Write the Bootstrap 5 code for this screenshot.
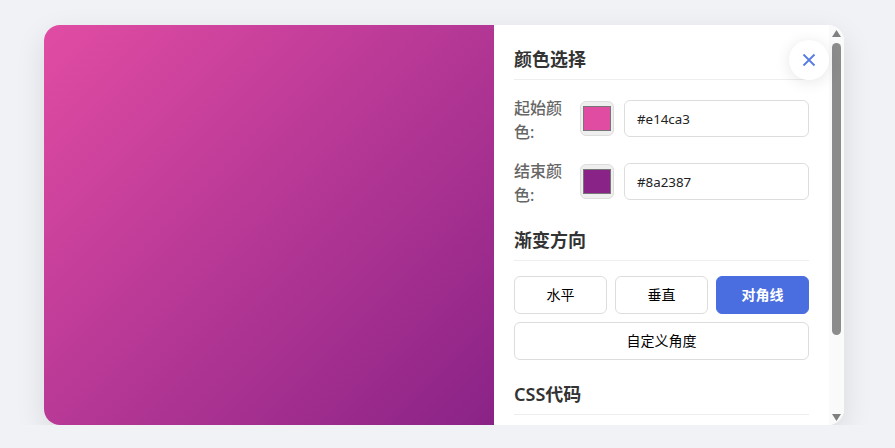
<!DOCTYPE html>
<html lang="zh-CN">
<head>
  <meta charset="UTF-8">
  <meta name="viewport" content="width=device-width, initial-scale=1.0">
  <title>渐变生成器</title>
  <link href="https://cdn.jsdelivr.net/npm/bootstrap@5.3.0/dist/css/bootstrap.min.css" rel="stylesheet">
  <style>
    body {
      background: #f0f2f5;
      font-family: "Noto Sans", "Noto Sans CJK SC", sans-serif;
      line-height: 1.6;
      color: #333;
      padding: 25px 0 0 44px;
    }
    .grad-shell {
      width: 800px;
      height: 400px;
      border-radius: 16px;
      background: #fff;
      box-shadow: 0 10px 30px rgba(0,0,0,0.1);
      overflow: hidden;
    }
    .grad-preview {
      width: 450px;
      background: linear-gradient(135deg, #e14ca3, #8a2387);
    }
    .grad-panel {
      width: 335px;
      padding: 20px 20px 0;
      overflow: hidden;
    }
    .panel-bar {
      width: 15px;
      background: #fafafa;
    }
    .bar-arrow {
      height: 15px;
      line-height: 0;
    }
    .bar-thumb {
      width: 9px;
      height: 292px;
      margin: 3px 3px 0;
      background: #8c8c8c;
      border-radius: 5px;
    }
    .panel-title {
      font-size: 18px;
      font-weight: 600;
      line-height: 1.6;
      padding-bottom: 5px;
      margin-bottom: 15px;
      border-bottom: 1px solid #eee;
      color: #333;
    }
    .panel-section { margin-bottom: 20px; }
    .panel-section:last-child .panel-title { padding-bottom: 6px; }
    .color-row { gap: 10px; margin-bottom: 15px; }
    .color-row:last-child { margin-bottom: 0; }
    .color-label {
      width: 56px;
      flex-shrink: 0;
      margin: 1px 0 -1px;
      font-size: 16px;
      font-weight: 500;
      line-height: 24px;
      color: #666;
    }
    .color-pick {
      width: 34px;
      height: 35px;
      padding: 4px 2px;
      flex-shrink: 0;
      background: #efefef;
      border: 1px solid #ddd;
      border-radius: 6px;
    }
    .color-text {
      height: 37px;
      font-size: 13.33px;
      padding: 8px 12px;
      border: 1px solid #ddd;
      border-radius: 6px;
      color: #222;
    }
    .dir-grid { display: grid; grid-template-columns: repeat(3, 1fr); gap: 8px; }
    .dir-btn {
      height: 38px;
      padding: 0;
      font-size: 14px;
      color: #000;
      background: #fff;
      border: 1px solid #ddd;
      border-radius: 6px;
    }
    .dir-btn.on { background: #4a6ee0; border-color: #4a6ee0; color: #fff; font-weight: 600; }
    .dir-wide { grid-column: 1 / -1; }
    .close-round {
      top: 15px;
      right: 15px;
      width: 40px;
      height: 40px;
      background: #fff;
      border: 0;
      border-radius: 50%;
      padding: 0;
      box-shadow: 0 2px 15px rgba(0,0,0,0.1);
    }
  </style>
</head>
<body>
  <div class="grad-shell d-flex position-relative">
    <div class="grad-preview"></div>
    <div class="grad-panel">
      <div class="panel-section">
        <div class="panel-title">颜色选择</div>
        <div class="color-row d-flex align-items-center">
          <label class="color-label">起始颜色:</label>
          <input type="color" class="color-pick" value="#e14ca3">
          <input type="text" class="form-control color-text" value="#e14ca3">
        </div>
        <div class="color-row d-flex align-items-center">
          <label class="color-label">结束颜色:</label>
          <input type="color" class="color-pick" value="#8a2387">
          <input type="text" class="form-control color-text" value="#8a2387">
        </div>
      </div>
      <div class="panel-section">
        <div class="panel-title">渐变方向</div>
        <div class="dir-grid">
          <button type="button" class="btn dir-btn">水平</button>
          <button type="button" class="btn dir-btn">垂直</button>
          <button type="button" class="btn dir-btn on">对角线</button>
          <button type="button" class="btn dir-btn dir-wide">自定义角度</button>
        </div>
      </div>
      <div class="panel-section mb-0">
        <div class="panel-title">CSS代码</div>
      </div>
    </div>
    <div class="panel-bar d-flex flex-column">
      <div class="bar-arrow"><svg width="15" height="15" viewBox="0 0 15 15"><path d="M7.5 5L12 12H3z" fill="#808080"/></svg></div>
      <div class="bar-thumb"></div>
      <div class="bar-arrow mt-auto"><svg width="15" height="15" viewBox="0 0 15 15"><path d="M3 4H12L7.5 11z" fill="#808080"/></svg></div>
    </div>
    <button type="button" class="close-round position-absolute d-flex align-items-center justify-content-center" aria-label="关闭">
      <svg width="14" height="14" viewBox="0 0 14 14"><path d="M1.5 1.5l11 11M12.5 1.5l-11 11" stroke="#567ae6" stroke-width="1.8" fill="none"/></svg>
    </button>
  </div>
  <script src="https://cdn.jsdelivr.net/npm/bootstrap@5.3.0/dist/js/bootstrap.bundle.min.js"></script>
</body>
</html>
